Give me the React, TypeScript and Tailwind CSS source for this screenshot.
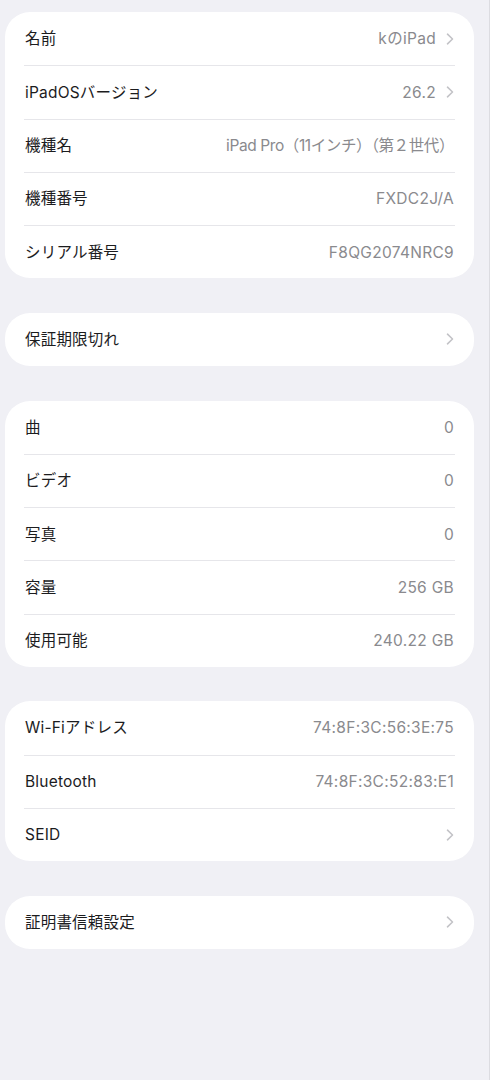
import React from "react";

type Row = { label: string; value?: string; chevron?: boolean; cjk?: boolean };

const groups: Row[][] = [
  [
    { label: "名前", value: "kのiPad", chevron: true },
    { label: "iPadOSバージョン", value: "26.2", chevron: true },
    { label: "機種名", value: "iPad Pro（11インチ）（第２世代）", cjk: true },
    { label: "機種番号", value: "FXDC2J/A" },
    { label: "シリアル番号", value: "F8QG2074NRC9" },
  ],
  [{ label: "保証期限切れ", chevron: true }],
  [
    { label: "曲", value: "0" },
    { label: "ビデオ", value: "0" },
    { label: "写真", value: "0" },
    { label: "容量", value: "256 GB" },
    { label: "使用可能", value: "240.22 GB" },
  ],
  [
    { label: "Wi-Fiアドレス", value: "74:8F:3C:56:3E:75" },
    { label: "Bluetooth", value: "74:8F:3C:52:83:E1" },
    { label: "SEID", chevron: true },
  ],
  [{ label: "証明書信頼設定", chevron: true }],
];

function Chevron() {
  return (
    <svg width="8" height="12" viewBox="0 0 8 12" className="ml-[10px] shrink-0">
      <path d="M1.5 1.2 L6.5 6 L1.5 10.8" fill="none" stroke="#c3c3c7" strokeWidth="1.6" strokeLinecap="round" strokeLinejoin="round" />
    </svg>
  );
}

function Group({ rows }: { rows: Row[] }) {
  return (
    <div className="bg-white rounded-[25px] px-[19px]">
      {rows.map((r, i) => (
        <div
          key={r.label}
          className={`h-[53.25px] flex items-center justify-between ${i > 0 ? "border-t border-[#e6e6ea]" : ""}`}
        >
          <span className="pl-[1px] text-[15.5px] tracking-[0.2px] text-[#1c1c1e]">{r.label}</span>
          <div className="flex items-center pr-[1px]">
            {r.value && (
              <span
                className={
                  r.cjk
                    ? "text-[15.5px] tracking-[-0.4px] [font-feature-settings:'chws'] text-[#8a8a8e]"
                    : "text-[15.5px] tracking-[0.3px] text-[#8a8a8e]"
                }
              >
                {r.value}
              </span>
            )}
            {r.chevron && <Chevron />}
          </div>
        </div>
      ))}
    </div>
  );
}

export default function App() {
  return (
    <div
      className="min-h-[1080px] bg-[#f0f0f5] border-r border-[#dcdce1] pt-[12px] pl-[5px] pr-[15px] flex flex-col gap-[34.5px]"
      style={{ fontFamily: 'Inter, "Noto Sans CJK JP", sans-serif' }}
    >
      {groups.map((g, i) => (
        <Group key={i} rows={g} />
      ))}
    </div>
  );
}
